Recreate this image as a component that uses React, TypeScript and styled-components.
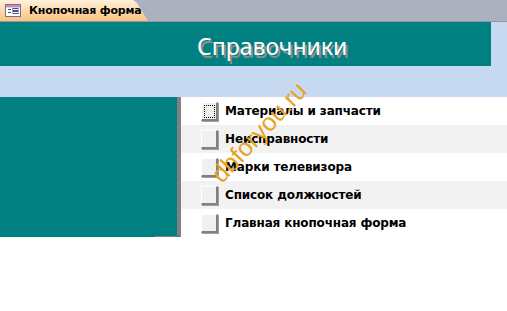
import styled, { createGlobalStyle } from 'styled-components'

const GlobalStyle = createGlobalStyle`
  html, body {
    margin: 0;
    padding: 0;
    background: #ffffff;
  }
  body {
    width: 507px;
    height: 311px;
    overflow: hidden;
    font-family: 'Liberation Sans', Arial, sans-serif;
  }
`

const items = [
  'Материалы и запчасти',
  'Неисправности',
  'Марки телевизора',
  'Список должностей',
  'Главная кнопочная форма',
]

export default function App() {
  return (
    <Page>
      <GlobalStyle />
      <TabBar>
        <Tab>
          <FormIcon />
          <TabLabel>Кнопочная форма</TabLabel>
        </Tab>
      </TabBar>
      <Header>
        <TitleBand>
          <Title>Справочники</Title>
        </TitleBand>
      </Header>
      <Body>
        <SidePanel />
        <Menu>
          {items.map((label, i) => (
            <Row key={label} $odd={i % 2 === 1}>
              <MenuButton $focused={i === 0} />
              <RowLabel>{label}</RowLabel>
            </Row>
          ))}
        </Menu>
      </Body>
      <Watermark>dbforyou.ru</Watermark>
    </Page>
  )
}

function FormIcon() {
  return (
    <svg width='16' height='13' viewBox='0 0 16 13'>
      <rect x='0.5' y='0.5' width='15' height='12' fill='#ffffff' stroke='#7b6f8f' />
      <rect x='1' y='1' width='14' height='2.5' fill='#c98fb8' />
      <rect x='3' y='5' width='3' height='1' fill='#3c4f8a' />
      <rect x='3' y='8' width='3' height='1' fill='#3c4f8a' />
      <rect x='8' y='4.5' width='5' height='2' fill='none' stroke='#3c4f8a' strokeWidth='1' />
      <rect x='8' y='7.5' width='5' height='2' fill='none' stroke='#3c4f8a' strokeWidth='1' />
    </svg>
  )
}

const Page = styled.div`
  position: relative;
  width: 507px;
  height: 311px;
  background: #ffffff;
`

const TabBar = styled.div`
  height: 21px;
  background: #abb1be;
  border-bottom: 1px solid #8f96a4;
  display: flex;
  align-items: flex-end;
`

const Tab = styled.div`
  height: 21px;
  width: 148px;
  display: flex;
  align-items: center;
  gap: 8px;
  padding-left: 5px;
  box-sizing: border-box;
  background: linear-gradient(to bottom, #fff1dc 0%, #fcd8a8 55%, #f8c27f 100%);
  clip-path: polygon(0 0, 133px 0, 137px 3px, 148px 21px, 0 21px);
`

const TabLabel = styled.span`
  font-family: Tahoma, 'DejaVu Sans', 'Liberation Sans', sans-serif;
  font-weight: bold;
  font-size: 11px;
  color: #000000;
  letter-spacing: -0.2px;
`

const Header = styled.div`
  background: #c6d9f1;
  height: 75px;
`

const TitleBand = styled.div`
  width: 491px;
  height: 44px;
  background: #008080;
  padding-left: 197px;
  box-sizing: border-box;
  display: flex;
  align-items: center;
`

const Title = styled.div`
  font-family: 'Noto Sans', 'Open Sans', sans-serif;
  font-size: 23px;
  color: #ffffff;
  text-shadow: 2px 3px 0 #8f8f8f;
  margin-top: 3px;
`

const Body = styled.div`
  display: flex;
`

const SidePanel = styled.div`
  width: 177px;
  height: 139px;
  background: #008080;
  border-right: 4px solid #808080;
  border-bottom: 1px solid transparent;
  position: relative;
  &::after {
    content: '';
    position: absolute;
    left: 155px;
    right: 0;
    bottom: -1px;
    height: 1px;
    background: #808080;
  }
  &::before {
    content: '';
    position: absolute;
    left: 0;
    width: 155px;
    bottom: -1px;
    height: 1px;
    background: #008080;
  }
`

const Menu = styled.div`
  flex: 1;
  display: flex;
  flex-direction: column;
`

const Row = styled.div<{ $odd: boolean }>`
  height: 28px;
  display: flex;
  align-items: center;
  padding-left: 20px;
  gap: 7px;
  background: ${(p) => (p.$odd ? '#f2f2f2' : '#ffffff')};
`

const MenuButton = styled.div<{ $focused: boolean }>`
  width: 17px;
  height: 19px;
  box-sizing: border-box;
  background: #f0f0f0;
  border-top: 1px solid #ffffff;
  border-left: 1px solid #ffffff;
  border-right: 2px solid #808080;
  border-bottom: 2px solid #808080;
  box-shadow: 1px 1px 0 #a0a0a0;
  outline: ${(p) => (p.$focused ? '1px dotted #000000' : 'none')};
  outline-offset: -4px;
`

const RowLabel = styled.span`
  font-family: Tahoma, 'DejaVu Sans', 'Liberation Sans', sans-serif;
  font-weight: bold;
  font-size: 12px;
  color: #000000;
  letter-spacing: -0.15px;
`

const Watermark = styled.div`
  position: absolute;
  left: 225px;
  top: 162px;
  font-family: 'Liberation Sans', Arial, sans-serif;
  font-size: 25px;
  color: #e8a21e;
  transform: rotate(-47deg);
  transform-origin: left bottom;
  white-space: nowrap;
  line-height: 1;
`
